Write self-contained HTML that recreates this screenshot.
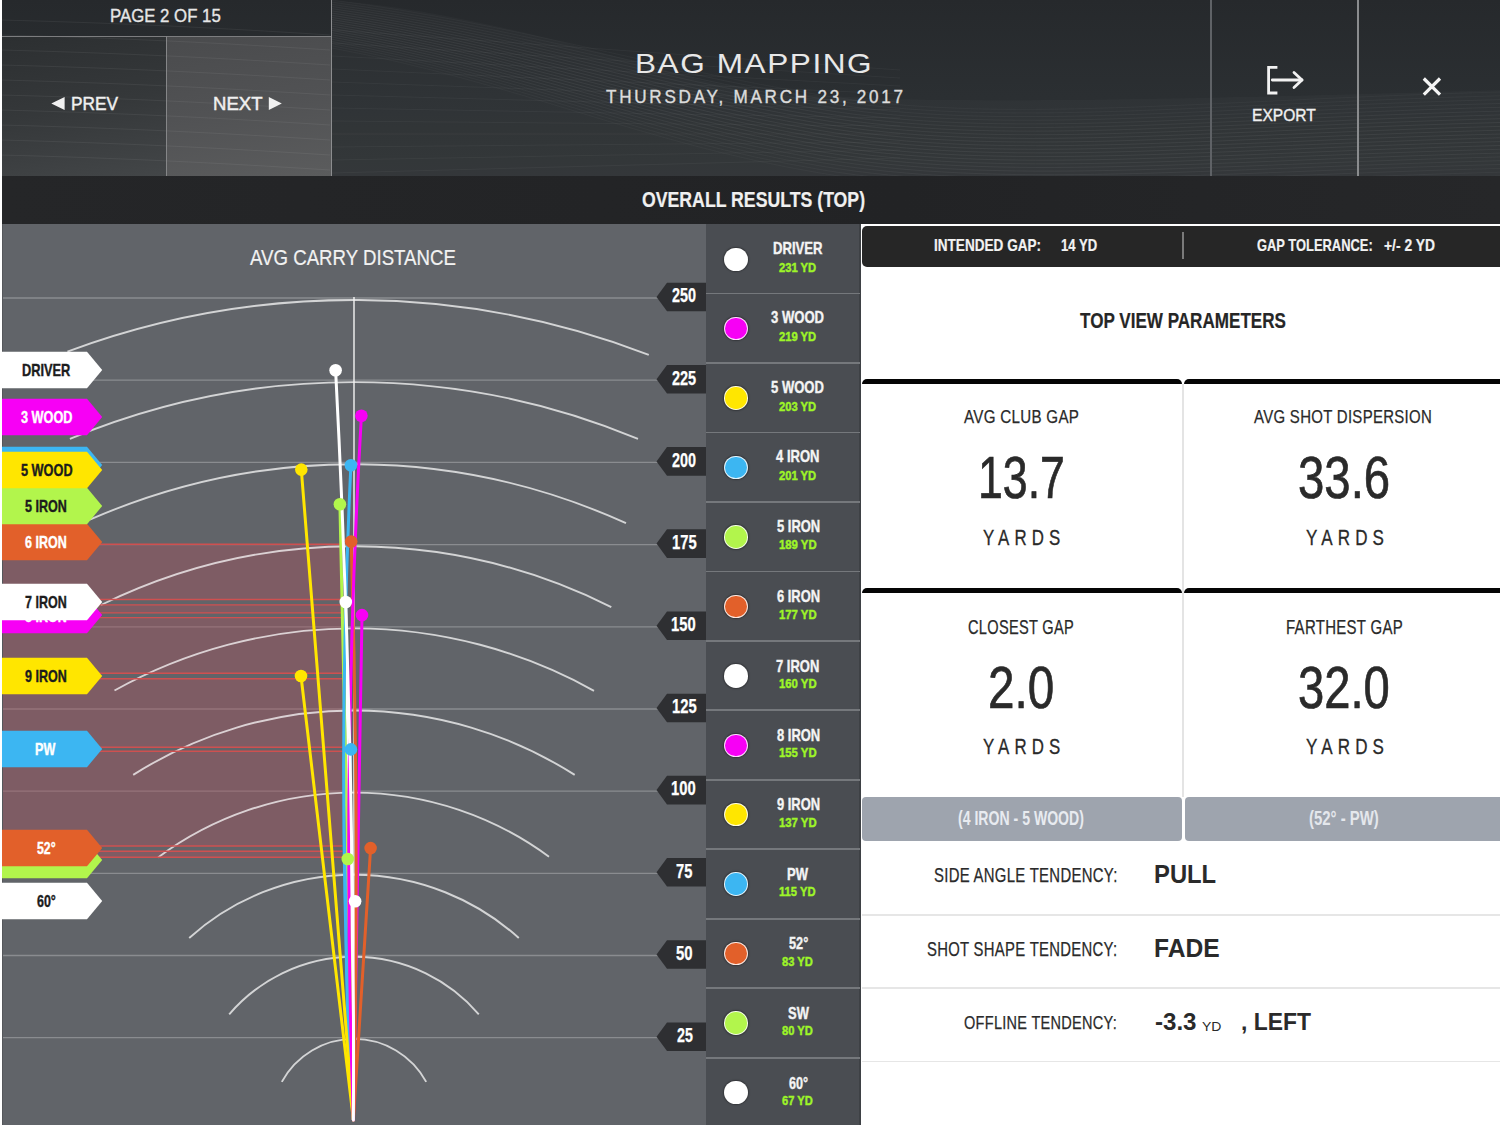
<!DOCTYPE html><html><head><meta charset="utf-8"><style>
*{margin:0;padding:0;box-sizing:border-box}
html,body{width:1500px;height:1125px;overflow:hidden;background:#fff}
body{position:relative;font-family:"Liberation Sans",sans-serif}
.abs{position:absolute}
.t{position:absolute;white-space:pre;line-height:1;transform-origin:0 0;font-family:"Liberation Sans",sans-serif}
.dot{position:absolute;width:23.6px;height:23.6px;border-radius:50%;border:1.4px solid rgba(255,255,255,0.85);box-shadow:0 0 1.5px 1px rgba(0,0,0,0.3)}
</style></head><body>
<div class="abs" style="left:2px;top:0;width:1498px;height:176px;background:linear-gradient(180deg,#26292c 0%,#2b2f32 55%,#303437 100%)"></div>
<div class="abs" style="left:2px;top:36px;width:164px;height:140px;background:linear-gradient(170deg,#2c2f31 0%,#35383a 50%,#434648 100%)"></div>
<div class="abs" style="left:167px;top:37px;width:164px;height:139px;background:linear-gradient(170deg,#4a4b4d 0%,#515254 50%,#5b5c5d 100%)"></div>
<svg class="abs" style="left:0;top:0" width="1500" height="176"><path d="M332,0 C450,10 560,40 700,80 C820,105 1000,105 1500,90 L1500,176 L332,176 Z" fill="#ffffff" fill-opacity="0.02"/><path d="M332,0.0 C520,25.0 640,65.0 820,95.0 S1200,100.0 1500,92.0" fill="none" stroke="#ffffff" stroke-opacity="0.030" stroke-width="1"/><path d="M332,2.2 C520,27.6 640,68.5 820,98.5 S1200,103.8 1500,95.8" fill="none" stroke="#ffffff" stroke-opacity="0.034" stroke-width="1"/><path d="M332,4.4 C520,30.3 640,72.1 820,102.1 S1200,107.6 1500,99.6" fill="none" stroke="#ffffff" stroke-opacity="0.038" stroke-width="1"/><path d="M332,6.5 C520,32.9 640,75.6 820,105.6 S1200,111.5 1500,103.5" fill="none" stroke="#ffffff" stroke-opacity="0.042" stroke-width="1"/><path d="M332,8.7 C520,35.5 640,79.2 820,109.2 S1200,115.3 1500,107.3" fill="none" stroke="#ffffff" stroke-opacity="0.046" stroke-width="1"/><path d="M332,10.9 C520,38.2 640,82.7 820,112.7 S1200,119.1 1500,111.1" fill="none" stroke="#ffffff" stroke-opacity="0.050" stroke-width="1"/><path d="M332,13.1 C520,40.8 640,86.3 820,116.3 S1200,122.9 1500,114.9" fill="none" stroke="#ffffff" stroke-opacity="0.053" stroke-width="1"/><path d="M332,15.3 C520,43.5 640,89.8 820,119.8 S1200,126.7 1500,118.7" fill="none" stroke="#ffffff" stroke-opacity="0.055" stroke-width="1"/><path d="M332,17.5 C520,46.1 640,93.4 820,123.4 S1200,130.5 1500,122.5" fill="none" stroke="#ffffff" stroke-opacity="0.057" stroke-width="1"/><path d="M332,19.6 C520,48.7 640,96.9 820,126.9 S1200,134.4 1500,126.4" fill="none" stroke="#ffffff" stroke-opacity="0.059" stroke-width="1"/><path d="M332,21.8 C520,51.4 640,100.5 820,130.5 S1200,138.2 1500,130.2" fill="none" stroke="#ffffff" stroke-opacity="0.060" stroke-width="1"/><path d="M332,24.0 C520,54.0 640,104.0 820,134.0 S1200,142.0 1500,134.0" fill="none" stroke="#ffffff" stroke-opacity="0.060" stroke-width="1"/><path d="M332,26.2 C520,56.6 640,107.5 820,137.5 S1200,145.8 1500,137.8" fill="none" stroke="#ffffff" stroke-opacity="0.060" stroke-width="1"/><path d="M332,28.4 C520,59.3 640,111.1 820,141.1 S1200,149.6 1500,141.6" fill="none" stroke="#ffffff" stroke-opacity="0.059" stroke-width="1"/><path d="M332,30.5 C520,61.9 640,114.6 820,144.6 S1200,153.5 1500,145.5" fill="none" stroke="#ffffff" stroke-opacity="0.057" stroke-width="1"/><path d="M332,32.7 C520,64.5 640,118.2 820,148.2 S1200,157.3 1500,149.3" fill="none" stroke="#ffffff" stroke-opacity="0.055" stroke-width="1"/><path d="M332,34.9 C520,67.2 640,121.7 820,151.7 S1200,161.1 1500,153.1" fill="none" stroke="#ffffff" stroke-opacity="0.053" stroke-width="1"/><path d="M332,37.1 C520,69.8 640,125.3 820,155.3 S1200,164.9 1500,156.9" fill="none" stroke="#ffffff" stroke-opacity="0.050" stroke-width="1"/><path d="M332,39.3 C520,72.5 640,128.8 820,158.8 S1200,168.7 1500,160.7" fill="none" stroke="#ffffff" stroke-opacity="0.046" stroke-width="1"/><path d="M332,41.5 C520,75.1 640,132.4 820,162.4 S1200,172.5 1500,164.5" fill="none" stroke="#ffffff" stroke-opacity="0.042" stroke-width="1"/><path d="M332,43.6 C520,77.7 640,135.9 820,165.9 S1200,176.4 1500,168.4" fill="none" stroke="#ffffff" stroke-opacity="0.038" stroke-width="1"/><path d="M332,45.8 C520,80.4 640,139.5 820,169.5 S1200,180.2 1500,172.2" fill="none" stroke="#ffffff" stroke-opacity="0.034" stroke-width="1"/><path d="M332,48.0 C520,83.0 640,143.0 820,173.0 S1200,184.0 1500,176.0" fill="none" stroke="#ffffff" stroke-opacity="0.030" stroke-width="1"/><path d="M332,30 L900,70" fill="none" stroke="#ffffff" stroke-opacity="0.04" stroke-width="1"/><path d="M332,43 L900,78" fill="none" stroke="#ffffff" stroke-opacity="0.04" stroke-width="1"/><path d="M332,56 L900,86" fill="none" stroke="#ffffff" stroke-opacity="0.04" stroke-width="1"/><path d="M332,69 L900,94" fill="none" stroke="#ffffff" stroke-opacity="0.04" stroke-width="1"/><path d="M332,82 L900,102" fill="none" stroke="#ffffff" stroke-opacity="0.04" stroke-width="1"/><path d="M332,95 L900,110" fill="none" stroke="#ffffff" stroke-opacity="0.04" stroke-width="1"/><path d="M332,108 L900,118" fill="none" stroke="#ffffff" stroke-opacity="0.04" stroke-width="1"/><path d="M332,121 L900,126" fill="none" stroke="#ffffff" stroke-opacity="0.04" stroke-width="1"/><path d="M332,134 L900,134" fill="none" stroke="#ffffff" stroke-opacity="0.04" stroke-width="1"/><path d="M332,147 L900,142" fill="none" stroke="#ffffff" stroke-opacity="0.04" stroke-width="1"/><path d="M332,160 L900,150" fill="none" stroke="#ffffff" stroke-opacity="0.04" stroke-width="1"/><path d="M332,173 L900,158" fill="none" stroke="#ffffff" stroke-opacity="0.04" stroke-width="1"/><path d="M0,20 C120,23 220,28 330,35" fill="none" stroke="#ffffff" stroke-opacity="0.06" stroke-width="1"/><path d="M0,35 C120,38 220,43 330,50" fill="none" stroke="#ffffff" stroke-opacity="0.06" stroke-width="1"/><path d="M0,50 C120,53 220,58 330,65" fill="none" stroke="#ffffff" stroke-opacity="0.06" stroke-width="1"/><path d="M0,65 C120,68 220,73 330,80" fill="none" stroke="#ffffff" stroke-opacity="0.06" stroke-width="1"/><path d="M0,80 C120,83 220,88 330,95" fill="none" stroke="#ffffff" stroke-opacity="0.06" stroke-width="1"/><path d="M0,95 C120,98 220,103 330,110" fill="none" stroke="#ffffff" stroke-opacity="0.06" stroke-width="1"/><path d="M0,110 C120,113 220,118 330,125" fill="none" stroke="#ffffff" stroke-opacity="0.06" stroke-width="1"/><path d="M0,125 C120,128 220,133 330,140" fill="none" stroke="#ffffff" stroke-opacity="0.06" stroke-width="1"/><path d="M0,140 C120,143 220,148 330,155" fill="none" stroke="#ffffff" stroke-opacity="0.06" stroke-width="1"/><path d="M0,155 C120,158 220,163 330,170" fill="none" stroke="#ffffff" stroke-opacity="0.06" stroke-width="1"/></svg>
<div class="abs" style="left:2px;top:35.5px;width:330px;height:1.5px;background:#7c7d7f"></div>
<div class="abs" style="left:165.5px;top:36px;width:1.5px;height:140px;background:#858688"></div>
<div class="abs" style="left:330.5px;top:0;width:1.6px;height:176px;background:#8c8d8f"></div>
<div class="abs" style="left:1210.2px;top:0;width:1.6px;height:176px;background:#5f6266"></div>
<div class="abs" style="left:1357px;top:0;width:1.6px;height:176px;background:#8a8c8e"></div>
<svg class="abs" style="left:0;top:0" width="1500" height="176">
 <polygon points="51.3,103.5 64.6,97.1 64.6,110" fill="#f0f0f0"/>
 <polygon points="281.8,103.5 268.8,97.1 268.8,110" fill="#f0f0f0"/>
 <path d="M1277.4,67.4 H1268.6 V93 H1277.4" fill="none" stroke="#f2f2f2" stroke-width="2.8"/>
 <path d="M1272.3,80 H1302" fill="none" stroke="#f2f2f2" stroke-width="2.8" stroke-linecap="round"/>
 <path d="M1294,72.5 L1302,80 L1294,87.5" fill="none" stroke="#f2f2f2" stroke-width="2.8" stroke-linecap="round" stroke-linejoin="round"/>
 <path d="M1423.8,78.5 L1440,94.6 M1440,78.5 L1423.8,94.6" fill="none" stroke="#f4f4f4" stroke-width="3.2"/>
</svg>
<div class="abs" style="left:2px;top:176px;width:1498px;height:48px;background:linear-gradient(90deg,#252628,#222325 60%,#262729)"></div>
<div class="abs" style="left:2px;top:224px;width:704px;height:901px;background:#616469"></div>
<div class="abs" style="left:2px;top:224px;width:1px;height:901px;background:#55575b"></div>
<svg class="abs" style="left:0;top:0" width="706" height="1125" viewBox="0 0 706 1125"><line x1="3" y1="1037.7" x2="660" y2="1037.7" stroke="#8a8c90" stroke-width="1.3"/><line x1="3" y1="955.5" x2="660" y2="955.5" stroke="#8a8c90" stroke-width="1.3"/><line x1="3" y1="873.3" x2="660" y2="873.3" stroke="#8a8c90" stroke-width="1.3"/><line x1="3" y1="791.1" x2="660" y2="791.1" stroke="#8a8c90" stroke-width="1.3"/><line x1="3" y1="709.0" x2="660" y2="709.0" stroke="#8a8c90" stroke-width="1.3"/><line x1="3" y1="626.8" x2="660" y2="626.8" stroke="#8a8c90" stroke-width="1.3"/><line x1="3" y1="544.6" x2="660" y2="544.6" stroke="#8a8c90" stroke-width="1.3"/><line x1="3" y1="462.4" x2="660" y2="462.4" stroke="#8a8c90" stroke-width="1.3"/><line x1="3" y1="380.2" x2="660" y2="380.2" stroke="#8a8c90" stroke-width="1.3"/><line x1="3" y1="298.0" x2="660" y2="298.0" stroke="#8a8c90" stroke-width="1.3"/><rect x="3" y="544.3" width="339.5" height="55.2" fill="#a8525e" fill-opacity="0.42"/><rect x="3" y="604.9" width="339.5" height="8.0" fill="#a8525e" fill-opacity="0.42"/><rect x="3" y="617.6" width="339.5" height="55.6" fill="#a8525e" fill-opacity="0.42"/><rect x="3" y="678.8" width="339.5" height="68.4" fill="#a8525e" fill-opacity="0.42"/><rect x="3" y="751.2" width="339.5" height="94.8" fill="#a8525e" fill-opacity="0.42"/><rect x="3" y="851.2" width="339.5" height="6.1" fill="#a8525e" fill-opacity="0.42"/><path d="M281.8,1081.9 A82.1,82.1 0 0 1 426.2,1081.9" fill="none" stroke="#ffffff" stroke-opacity="0.72" stroke-width="1.9"/><path d="M229.2,1014.3 A164.2,164.2 0 0 1 478.8,1014.3" fill="none" stroke="#ffffff" stroke-opacity="0.72" stroke-width="1.9"/><path d="M189.2,938.0 A246.3,246.3 0 0 1 518.8,938.0" fill="none" stroke="#ffffff" stroke-opacity="0.72" stroke-width="1.9"/><path d="M158.1,857.4 A328.4,328.4 0 0 1 549.0,856.8" fill="none" stroke="#ffffff" stroke-opacity="0.72" stroke-width="1.9"/><path d="M133.2,774.9 A410.5,410.5 0 0 1 574.7,774.9" fill="none" stroke="#ffffff" stroke-opacity="0.72" stroke-width="1.9"/><path d="M114.5,690.5 A492.6,492.6 0 0 1 594.0,690.8" fill="none" stroke="#ffffff" stroke-opacity="0.72" stroke-width="1.9"/><path d="M101.0,605.0 A574.7,574.7 0 0 1 611.3,607.1" fill="none" stroke="#ffffff" stroke-opacity="0.72" stroke-width="1.9"/><path d="M89.8,519.7 A656.8,656.8 0 0 1 626.0,523.2" fill="none" stroke="#ffffff" stroke-opacity="0.72" stroke-width="1.9"/><path d="M69.9,438.9 A738.9,738.9 0 0 1 638.0,438.9" fill="none" stroke="#ffffff" stroke-opacity="0.72" stroke-width="1.9"/><path d="M67.4,351.6 A821.0,821.0 0 0 1 648.8,354.8" fill="none" stroke="#ffffff" stroke-opacity="0.72" stroke-width="1.9"/><line x1="3" y1="544.3" x2="342.5" y2="544.3" stroke="#cf5050" stroke-width="1.4"/><line x1="3" y1="599.5" x2="342.5" y2="599.5" stroke="#cf5050" stroke-width="1.4"/><line x1="3" y1="604.9" x2="342.5" y2="604.9" stroke="#cf5050" stroke-width="1.4"/><line x1="3" y1="612.9" x2="342.5" y2="612.9" stroke="#cf5050" stroke-width="1.4"/><line x1="3" y1="617.6" x2="342.5" y2="617.6" stroke="#cf5050" stroke-width="1.4"/><line x1="3" y1="673.2" x2="342.5" y2="673.2" stroke="#cf5050" stroke-width="1.4"/><line x1="3" y1="678.8" x2="342.5" y2="678.8" stroke="#cf5050" stroke-width="1.4"/><line x1="3" y1="747.2" x2="342.5" y2="747.2" stroke="#cf5050" stroke-width="1.4"/><line x1="3" y1="751.2" x2="342.5" y2="751.2" stroke="#cf5050" stroke-width="1.4"/><line x1="3" y1="846.0" x2="342.5" y2="846.0" stroke="#cf5050" stroke-width="1.4"/><line x1="3" y1="851.2" x2="342.5" y2="851.2" stroke="#cf5050" stroke-width="1.4"/><line x1="3" y1="857.3" x2="342.5" y2="857.3" stroke="#cf5050" stroke-width="1.4"/><line x1="354" y1="297" x2="354" y2="1121" stroke="#f4f4f4" stroke-width="1.4"/><polygon points="656.5,1036.7 667,1022.4 706,1022.4 706,1051.0 667,1051.0" fill="#2e2f32"/><polygon points="656.5,954.5 667,940.2 706,940.2 706,968.8 667,968.8" fill="#2e2f32"/><polygon points="656.5,872.3 667,858.0 706,858.0 706,886.6 667,886.6" fill="#2e2f32"/><polygon points="656.5,790.1 667,775.8 706,775.8 706,804.4 667,804.4" fill="#2e2f32"/><polygon points="656.5,708.0 667,693.7 706,693.7 706,722.2 667,722.2" fill="#2e2f32"/><polygon points="656.5,625.8 667,611.5 706,611.5 706,640.1 667,640.1" fill="#2e2f32"/><polygon points="656.5,543.6 667,529.3 706,529.3 706,557.9 667,557.9" fill="#2e2f32"/><polygon points="656.5,461.4 667,447.1 706,447.1 706,475.7 667,475.7" fill="#2e2f32"/><polygon points="656.5,379.2 667,364.9 706,364.9 706,393.5 667,393.5" fill="#2e2f32"/><polygon points="656.5,297.0 667,282.7 706,282.7 706,311.3 667,311.3" fill="#2e2f32"/><path d="M353.4,1120.0 L355.1,901.3" fill="none" stroke="#ffffff" stroke-width="3" stroke-linecap="round"/><path d="M353.4,1120.0 L347.8,859.0" fill="none" stroke="#b2f54c" stroke-width="3" stroke-linecap="round"/><path d="M353.4,1120.0 L370.6,848.1" fill="none" stroke="#e2602a" stroke-width="3" stroke-linecap="round"/><path d="M353.4,1120.0 Q339.89,934.70 350.9,749.4" fill="none" stroke="#3cb6f2" stroke-width="3" stroke-linecap="round"/><path d="M353.4,1120.0 L301.0,676.0" fill="none" stroke="#ffe600" stroke-width="3" stroke-linecap="round"/><path d="M353.4,1120.0 L362.0,615.1" fill="none" stroke="#f700f5" stroke-width="3" stroke-linecap="round"/><path d="M353.4,1120.0 L345.8,602.0" fill="none" stroke="#ffffff" stroke-width="3" stroke-linecap="round"/><path d="M353.4,1120.0 Q359.91,830.75 351.2,541.5" fill="none" stroke="#e2602a" stroke-width="3" stroke-linecap="round"/><path d="M353.4,1120.0 L339.9,504.3" fill="none" stroke="#b2f54c" stroke-width="3" stroke-linecap="round"/><path d="M353.4,1120.0 Q335.20,792.60 350.9,465.2" fill="none" stroke="#3cb6f2" stroke-width="3" stroke-linecap="round"/><path d="M353.4,1120.0 L301.3,469.6" fill="none" stroke="#ffe600" stroke-width="3" stroke-linecap="round"/><path d="M353.4,1120.0 Q341.09,767.90 361.4,415.8" fill="none" stroke="#f700f5" stroke-width="3" stroke-linecap="round"/><path d="M353.4,1120.0 Q355.10,745.10 335.6,370.2" fill="none" stroke="#ffffff" stroke-width="3" stroke-linecap="round"/><circle cx="355.1" cy="901.3" r="6.3" fill="#ffffff"/><circle cx="347.8" cy="859.0" r="6.3" fill="#b2f54c"/><circle cx="370.6" cy="848.1" r="6.3" fill="#e2602a"/><circle cx="350.9" cy="749.4" r="6.3" fill="#3cb6f2"/><circle cx="301.0" cy="676.0" r="6.3" fill="#ffe600"/><circle cx="362.0" cy="615.1" r="6.3" fill="#f700f5"/><circle cx="345.8" cy="602.0" r="6.3" fill="#ffffff"/><circle cx="351.2" cy="541.5" r="6.3" fill="#e2602a"/><circle cx="339.9" cy="504.3" r="6.3" fill="#b2f54c"/><circle cx="350.9" cy="465.2" r="6.3" fill="#3cb6f2"/><circle cx="301.3" cy="469.6" r="6.3" fill="#ffe600"/><circle cx="361.4" cy="415.8" r="6.3" fill="#f700f5"/><circle cx="335.6" cy="370.2" r="6.3" fill="#ffffff"/></svg>
<svg class="abs" style="left:0;top:882.0px" width="104" height="38"><polygon points="2,0.8 87,0.8 102.2,19 87,37.2 2,37.2" fill="#ffffff"/></svg><div class="t" style="left:36.94px;top:893.47px;font-size:16.38px;font-weight:700;letter-spacing:0em;color:#1c1c1c;transform:scaleX(0.7620);-webkit-text-stroke:0.4px #1c1c1c">60°</div><svg class="abs" style="left:0;top:841.0px" width="104" height="38"><polygon points="2,0.8 87,0.8 102.2,19 87,37.2 2,37.2" fill="#b2f54c"/></svg><svg class="abs" style="left:0;top:829.0px" width="104" height="38"><polygon points="2,0.8 87,0.8 102.2,19 87,37.2 2,37.2" fill="#e2602a"/></svg><div class="t" style="left:36.89px;top:840.47px;font-size:16.38px;font-weight:700;letter-spacing:0em;color:#ffffff;transform:scaleX(0.7492);-webkit-text-stroke:0.4px #ffffff">52°</div><svg class="abs" style="left:0;top:730.0px" width="104" height="38"><polygon points="2,0.8 87,0.8 102.2,19 87,37.2 2,37.2" fill="#3cb6f2"/></svg><div class="t" style="left:35.46px;top:741.47px;font-size:16.38px;font-weight:700;letter-spacing:0em;color:#ffffff;transform:scaleX(0.7704);-webkit-text-stroke:0.4px #ffffff">PW</div><svg class="abs" style="left:0;top:657.0px" width="104" height="38"><polygon points="2,0.8 87,0.8 102.2,19 87,37.2 2,37.2" fill="#ffe600"/></svg><div class="t" style="left:25.08px;top:668.47px;font-size:16.38px;font-weight:700;letter-spacing:0em;color:#1c1c1c;transform:scaleX(0.7649);-webkit-text-stroke:0.4px #1c1c1c">9 IRON</div><svg class="abs" style="left:0;top:596.3px" width="104" height="38"><polygon points="2,0.8 87,0.8 102.2,19 87,37.2 2,37.2" fill="#f700f5"/></svg><div class="t" style="left:25.12px;top:607.58px;font-size:16.38px;font-weight:700;letter-spacing:0em;color:#ffffff;transform:scaleX(0.7648);-webkit-text-stroke:0.4px #ffffff">8 IRON</div><svg class="abs" style="left:0;top:583.0px" width="104" height="38"><polygon points="2,0.8 87,0.8 102.2,19 87,37.2 2,37.2" fill="#ffffff"/></svg><div class="t" style="left:25.02px;top:594.28px;font-size:16.38px;font-weight:700;letter-spacing:0em;color:#1c1c1c;transform:scaleX(0.7648);-webkit-text-stroke:0.4px #1c1c1c">7 IRON</div><svg class="abs" style="left:0;top:522.7px" width="104" height="38"><polygon points="2,0.8 87,0.8 102.2,19 87,37.2 2,37.2" fill="#e2602a"/></svg><div class="t" style="left:25.09px;top:533.98px;font-size:16.38px;font-weight:700;letter-spacing:0em;color:#ffffff;transform:scaleX(0.7648);-webkit-text-stroke:0.4px #ffffff">6 IRON</div><svg class="abs" style="left:0;top:486.6px" width="104" height="38"><polygon points="2,0.8 87,0.8 102.2,19 87,37.2 2,37.2" fill="#b2f54c"/></svg><div class="t" style="left:25.03px;top:497.65px;font-size:16.38px;font-weight:700;letter-spacing:0em;color:#1c1c1c;transform:scaleX(0.7674);-webkit-text-stroke:0.4px #1c1c1c">5 IRON</div><svg class="abs" style="left:0;top:446.4px" width="104" height="38"><polygon points="2,0.8 87,0.8 102.2,19 87,37.2 2,37.2" fill="#3cb6f2"/></svg><svg class="abs" style="left:0;top:450.8px" width="104" height="38"><polygon points="2,0.8 87,0.8 102.2,19 87,37.2 2,37.2" fill="#ffe600"/></svg><div class="t" style="left:20.89px;top:462.31px;font-size:16.38px;font-weight:700;letter-spacing:0em;color:#1c1c1c;transform:scaleX(0.7773);-webkit-text-stroke:0.4px #1c1c1c">5 WOOD</div><svg class="abs" style="left:0;top:397.5px" width="104" height="38"><polygon points="2,0.8 87,0.8 102.2,19 87,37.2 2,37.2" fill="#f700f5"/></svg><div class="t" style="left:20.87px;top:409.12px;font-size:16.38px;font-weight:700;letter-spacing:0em;color:#ffffff;transform:scaleX(0.7770);-webkit-text-stroke:0.4px #ffffff">3 WOOD</div><svg class="abs" style="left:0;top:351.0px" width="104" height="38"><polygon points="2,0.8 87,0.8 102.2,19 87,37.2 2,37.2" fill="#ffffff"/></svg><div class="t" style="left:21.53px;top:362.47px;font-size:16.38px;font-weight:700;letter-spacing:0em;color:#1c1c1c;transform:scaleX(0.7822);-webkit-text-stroke:0.4px #1c1c1c">DRIVER</div>
<div class="t" style="left:676.82px;top:1026.03px;font-size:19.42px;font-weight:700;letter-spacing:0em;color:#ffffff;transform:scaleX(0.7317);-webkit-text-stroke:0.25px #ffffff">25</div><div class="t" style="left:675.91px;top:943.53px;font-size:19.42px;font-weight:700;letter-spacing:0em;color:#ffffff;transform:scaleX(0.7701);-webkit-text-stroke:0.25px #ffffff">50</div><div class="t" style="left:675.70px;top:861.81px;font-size:19.42px;font-weight:700;letter-spacing:0em;color:#ffffff;transform:scaleX(0.7578);-webkit-text-stroke:0.25px #ffffff">75</div><div class="t" style="left:671.46px;top:779.45px;font-size:19.42px;font-weight:700;letter-spacing:0em;color:#ffffff;transform:scaleX(0.7618);-webkit-text-stroke:0.25px #ffffff">100</div><div class="t" style="left:671.72px;top:696.83px;font-size:19.42px;font-weight:700;letter-spacing:0em;color:#ffffff;transform:scaleX(0.7615);-webkit-text-stroke:0.25px #ffffff">125</div><div class="t" style="left:671.46px;top:615.20px;font-size:19.42px;font-weight:700;letter-spacing:0em;color:#ffffff;transform:scaleX(0.7618);-webkit-text-stroke:0.25px #ffffff">150</div><div class="t" style="left:671.72px;top:532.80px;font-size:19.42px;font-weight:700;letter-spacing:0em;color:#ffffff;transform:scaleX(0.7615);-webkit-text-stroke:0.25px #ffffff">175</div><div class="t" style="left:672.48px;top:450.75px;font-size:19.42px;font-weight:700;letter-spacing:0em;color:#ffffff;transform:scaleX(0.7419);-webkit-text-stroke:0.25px #ffffff">200</div><div class="t" style="left:672.24px;top:368.62px;font-size:19.42px;font-weight:700;letter-spacing:0em;color:#ffffff;transform:scaleX(0.7470);-webkit-text-stroke:0.25px #ffffff">225</div><div class="t" style="left:672.48px;top:285.99px;font-size:19.42px;font-weight:700;letter-spacing:0em;color:#ffffff;transform:scaleX(0.7419);-webkit-text-stroke:0.25px #ffffff">250</div>
<div class="abs" style="left:706px;top:224px;width:154px;height:901px;background:#4a4d52"></div>
<div class="abs" style="left:858.8px;top:224px;width:2px;height:901px;background:#3e4145"></div>
<div class="abs" style="left:706px;top:292.6px;width:154px;height:1.8px;background:#75787c"></div><div class="abs" style="left:706px;top:362.1px;width:154px;height:1.8px;background:#75787c"></div><div class="abs" style="left:706px;top:431.5px;width:154px;height:1.8px;background:#75787c"></div><div class="abs" style="left:706px;top:501.0px;width:154px;height:1.8px;background:#75787c"></div><div class="abs" style="left:706px;top:570.5px;width:154px;height:1.8px;background:#75787c"></div><div class="abs" style="left:706px;top:640.0px;width:154px;height:1.8px;background:#75787c"></div><div class="abs" style="left:706px;top:709.4px;width:154px;height:1.8px;background:#75787c"></div><div class="abs" style="left:706px;top:778.9px;width:154px;height:1.8px;background:#75787c"></div><div class="abs" style="left:706px;top:848.4px;width:154px;height:1.8px;background:#75787c"></div><div class="abs" style="left:706px;top:917.8px;width:154px;height:1.8px;background:#75787c"></div><div class="abs" style="left:706px;top:987.3px;width:154px;height:1.8px;background:#75787c"></div><div class="abs" style="left:706px;top:1056.8px;width:154px;height:1.8px;background:#75787c"></div>
<div class="dot" style="left:724.1px;top:247.5px;background:#ffffff"></div><div class="t" style="left:772.73px;top:240.30px;font-size:17.39px;font-weight:700;letter-spacing:0em;color:#f4f4f4;transform:scaleX(0.7548);-webkit-text-stroke:0.4px #f4f4f4">DRIVER</div><div class="t" style="left:779.20px;top:260.84px;font-size:13.62px;font-weight:700;letter-spacing:0em;color:#9ef528;transform:scaleX(0.8232);-webkit-text-stroke:0.45px #9ef528">231 YD</div><div class="dot" style="left:724.1px;top:316.9px;background:#f700f5"></div><div class="t" style="left:771.15px;top:309.39px;font-size:17.39px;font-weight:700;letter-spacing:0em;color:#f4f4f4;transform:scaleX(0.7532);-webkit-text-stroke:0.4px #f4f4f4">3 WOOD</div><div class="t" style="left:779.20px;top:329.86px;font-size:13.62px;font-weight:700;letter-spacing:0em;color:#9ef528;transform:scaleX(0.8232);-webkit-text-stroke:0.45px #9ef528">219 YD</div><div class="dot" style="left:724.1px;top:386.4px;background:#ffe600"></div><div class="t" style="left:771.17px;top:379.27px;font-size:17.39px;font-weight:700;letter-spacing:0em;color:#f4f4f4;transform:scaleX(0.7514);-webkit-text-stroke:0.4px #f4f4f4">5 WOOD</div><div class="t" style="left:779.20px;top:399.68px;font-size:13.62px;font-weight:700;letter-spacing:0em;color:#9ef528;transform:scaleX(0.8232);-webkit-text-stroke:0.45px #9ef528">203 YD</div><div class="dot" style="left:724.1px;top:455.8px;background:#3cb6f2"></div><div class="t" style="left:776.16px;top:448.35px;font-size:17.39px;font-weight:700;letter-spacing:0em;color:#f4f4f4;transform:scaleX(0.7505);-webkit-text-stroke:0.4px #f4f4f4">4 IRON</div><div class="t" style="left:779.20px;top:468.70px;font-size:13.62px;font-weight:700;letter-spacing:0em;color:#9ef528;transform:scaleX(0.8232);-webkit-text-stroke:0.45px #9ef528">201 YD</div><div class="dot" style="left:724.1px;top:525.2px;background:#b2f54c"></div><div class="t" style="left:776.89px;top:518.23px;font-size:17.39px;font-weight:700;letter-spacing:0em;color:#f4f4f4;transform:scaleX(0.7464);-webkit-text-stroke:0.4px #f4f4f4">5 IRON</div><div class="t" style="left:778.90px;top:538.02px;font-size:13.62px;font-weight:700;letter-spacing:0em;color:#9ef528;transform:scaleX(0.8330);-webkit-text-stroke:0.45px #9ef528">189 YD</div><div class="dot" style="left:724.1px;top:594.6px;background:#e2602a"></div><div class="t" style="left:776.93px;top:587.81px;font-size:17.39px;font-weight:700;letter-spacing:0em;color:#f4f4f4;transform:scaleX(0.7441);-webkit-text-stroke:0.4px #f4f4f4">6 IRON</div><div class="t" style="left:778.90px;top:607.84px;font-size:13.62px;font-weight:700;letter-spacing:0em;color:#9ef528;transform:scaleX(0.8330);-webkit-text-stroke:0.45px #9ef528">177 YD</div><div class="dot" style="left:724.1px;top:664.1px;background:#ffffff"></div><div class="t" style="left:776.22px;top:657.69px;font-size:17.39px;font-weight:700;letter-spacing:0em;color:#f4f4f4;transform:scaleX(0.7479);-webkit-text-stroke:0.4px #f4f4f4">7 IRON</div><div class="t" style="left:778.90px;top:676.86px;font-size:13.62px;font-weight:700;letter-spacing:0em;color:#9ef528;transform:scaleX(0.8330);-webkit-text-stroke:0.45px #9ef528">160 YD</div><div class="dot" style="left:724.1px;top:733.5px;background:#f700f5"></div><div class="t" style="left:776.90px;top:727.27px;font-size:17.39px;font-weight:700;letter-spacing:0em;color:#f4f4f4;transform:scaleX(0.7462);-webkit-text-stroke:0.4px #f4f4f4">8 IRON</div><div class="t" style="left:778.90px;top:746.04px;font-size:13.62px;font-weight:700;letter-spacing:0em;color:#9ef528;transform:scaleX(0.8330);-webkit-text-stroke:0.45px #9ef528">155 YD</div><div class="dot" style="left:724.1px;top:802.9px;background:#ffe600"></div><div class="t" style="left:776.94px;top:796.35px;font-size:17.39px;font-weight:700;letter-spacing:0em;color:#f4f4f4;transform:scaleX(0.7441);-webkit-text-stroke:0.4px #f4f4f4">9 IRON</div><div class="t" style="left:778.90px;top:815.70px;font-size:13.62px;font-weight:700;letter-spacing:0em;color:#9ef528;transform:scaleX(0.8330);-webkit-text-stroke:0.45px #9ef528">137 YD</div><div class="dot" style="left:724.1px;top:872.4px;background:#3cb6f2"></div><div class="t" style="left:787.00px;top:866.23px;font-size:17.39px;font-weight:700;letter-spacing:0em;color:#f4f4f4;transform:scaleX(0.7503);-webkit-text-stroke:0.4px #f4f4f4">PW</div><div class="t" style="left:779.15px;top:885.18px;font-size:13.62px;font-weight:700;letter-spacing:0em;color:#9ef528;transform:scaleX(0.8229);-webkit-text-stroke:0.45px #9ef528">115 YD</div><div class="dot" style="left:724.1px;top:941.8px;background:#e2602a"></div><div class="t" style="left:788.59px;top:935.31px;font-size:17.39px;font-weight:700;letter-spacing:0em;color:#f4f4f4;transform:scaleX(0.7317);-webkit-text-stroke:0.4px #f4f4f4">52°</div><div class="t" style="left:782.26px;top:954.84px;font-size:13.62px;font-weight:700;letter-spacing:0em;color:#9ef528;transform:scaleX(0.8200);-webkit-text-stroke:0.45px #9ef528">83 YD</div><div class="dot" style="left:724.1px;top:1011.2px;background:#b2f54c"></div><div class="t" style="left:787.54px;top:1005.19px;font-size:17.39px;font-weight:700;letter-spacing:0em;color:#f4f4f4;transform:scaleX(0.7456);-webkit-text-stroke:0.4px #f4f4f4">SW</div><div class="t" style="left:782.26px;top:1023.86px;font-size:13.62px;font-weight:700;letter-spacing:0em;color:#9ef528;transform:scaleX(0.8200);-webkit-text-stroke:0.45px #9ef528">80 YD</div><div class="dot" style="left:724.1px;top:1080.7px;background:#ffffff"></div><div class="t" style="left:788.65px;top:1074.73px;font-size:17.39px;font-weight:700;letter-spacing:0em;color:#f4f4f4;transform:scaleX(0.7255);-webkit-text-stroke:0.4px #f4f4f4">60°</div><div class="t" style="left:782.29px;top:1093.68px;font-size:13.62px;font-weight:700;letter-spacing:0em;color:#9ef528;transform:scaleX(0.8168);-webkit-text-stroke:0.45px #9ef528">67 YD</div>
<div class="abs" style="left:860.6px;top:224px;width:640px;height:901px;background:#ffffff"></div>
<div class="abs" style="left:862px;top:226px;width:650px;height:40.5px;background:#262626;border-radius:5px"></div>
<div class="abs" style="left:1182.3px;top:232px;width:1.8px;height:27px;background:#7a7a7a"></div>
<div class="abs" style="left:1182.2px;top:384px;width:1.6px;height:413px;background:#e4e4e4"></div>
<div class="abs" style="left:862px;top:379px;width:320px;height:5px;background:#050505;border-radius:5px 5px 0 0"></div>
<div class="abs" style="left:1184px;top:379px;width:330px;height:5px;background:#050505;border-radius:5px 5px 0 0"></div>
<div class="abs" style="left:862px;top:588px;width:320px;height:5px;background:#050505;border-radius:5px 5px 0 0"></div>
<div class="abs" style="left:1184px;top:588px;width:330px;height:5px;background:#050505;border-radius:5px 5px 0 0"></div>
<div class="abs" style="left:862px;top:797px;width:319.5px;height:44px;background:#9ea4ae;border-radius:4px"></div>
<div class="abs" style="left:1184.5px;top:797px;width:330px;height:44px;background:#9ea4ae;border-radius:4px"></div>
<div class="abs" style="left:862px;top:914px;width:638px;height:1.5px;background:#e6e6e6"></div>
<div class="abs" style="left:862px;top:987px;width:638px;height:1.5px;background:#e6e6e6"></div>
<div class="abs" style="left:862px;top:1060.5px;width:638px;height:1.5px;background:#e6e6e6"></div>
<div class="t" style="left:109.75px;top:6.56px;font-size:18.55px;font-weight:400;letter-spacing:0em;color:#e6e6e6;transform:scaleX(0.9063);-webkit-text-stroke:0.35px #e6e6e6">PAGE 2 OF 15</div><div class="t" style="left:70.71px;top:94.95px;font-size:18.12px;font-weight:400;letter-spacing:0em;color:#f0f0f0;transform:scaleX(0.9537);-webkit-text-stroke:0.45px #f0f0f0">PREV</div><div class="t" style="left:212.56px;top:94.95px;font-size:18.12px;font-weight:400;letter-spacing:0em;color:#f0f0f0;transform:scaleX(1.0245);-webkit-text-stroke:0.45px #f0f0f0">NEXT</div><div class="t" style="left:635.08px;top:50.01px;font-size:27.68px;font-weight:400;letter-spacing:0.05em;color:#e8e8e8;transform:scaleX(1.1399)">BAG MAPPING</div><div class="t" style="left:606.02px;top:88.17px;font-size:18.55px;font-weight:400;letter-spacing:0.16em;color:#dcdcdc;transform:scaleX(0.9229);-webkit-text-stroke:0.4px #dcdcdc">THURSDAY, MARCH 23, 2017</div><div class="t" style="left:1251.62px;top:107.68px;font-size:15.94px;font-weight:400;letter-spacing:0em;color:#f0f0f0;transform:scaleX(0.9762);-webkit-text-stroke:0.35px #f0f0f0">EXPORT</div><div class="t" style="left:642.25px;top:189.01px;font-size:22.46px;font-weight:700;letter-spacing:0em;color:#f0f0f0;transform:scaleX(0.7877);-webkit-text-stroke:0.2px #f0f0f0">OVERALL RESULTS (TOP)</div><div class="t" style="left:250.07px;top:246.91px;font-size:22.17px;font-weight:400;letter-spacing:0em;color:#f2f2f2;transform:scaleX(0.8418);-webkit-text-stroke:0.2px #f2f2f2">AVG CARRY DISTANCE</div><div class="t" style="left:933.63px;top:238.02px;font-size:16.96px;font-weight:700;letter-spacing:0em;color:#f2f2f2;transform:scaleX(0.8012);-webkit-text-stroke:0.2px #f2f2f2">INTENDED GAP:</div><div class="t" style="left:1060.97px;top:238.02px;font-size:16.96px;font-weight:700;letter-spacing:0em;color:#f2f2f2;transform:scaleX(0.7718);-webkit-text-stroke:0.2px #f2f2f2">14 YD</div><div class="t" style="left:1257.28px;top:238.02px;font-size:16.96px;font-weight:700;letter-spacing:0em;color:#f2f2f2;transform:scaleX(0.7619);-webkit-text-stroke:0.2px #f2f2f2">GAP TOLERANCE:</div><div class="t" style="left:1384.19px;top:237.72px;font-size:16.96px;font-weight:700;letter-spacing:0em;color:#f2f2f2;transform:scaleX(0.8176);-webkit-text-stroke:0.2px #f2f2f2">+/- 2 YD</div><div class="t" style="left:1079.98px;top:309.87px;font-size:21.59px;font-weight:700;letter-spacing:0em;color:#262626;transform:scaleX(0.7916);-webkit-text-stroke:0.2px #262626">TOP VIEW PARAMETERS</div><div class="t" style="left:963.96px;top:408.12px;font-size:18.55px;font-weight:400;letter-spacing:0.02em;color:#2a2a2a;transform:scaleX(0.8169);-webkit-text-stroke:0.25px #2a2a2a">AVG CLUB GAP</div><div class="t" style="left:1254.28px;top:408.12px;font-size:18.55px;font-weight:400;letter-spacing:0.02em;color:#2a2a2a;transform:scaleX(0.8076);-webkit-text-stroke:0.25px #2a2a2a">AVG SHOT DISPERSION</div><div class="t" style="left:968.37px;top:617.67px;font-size:19.42px;font-weight:400;letter-spacing:0.02em;color:#2a2a2a;transform:scaleX(0.7521);-webkit-text-stroke:0.25px #2a2a2a">CLOSEST GAP</div><div class="t" style="left:1285.64px;top:617.67px;font-size:19.42px;font-weight:400;letter-spacing:0.02em;color:#2a2a2a;transform:scaleX(0.7714);-webkit-text-stroke:0.25px #2a2a2a">FARTHEST GAP</div><div class="t" style="left:978.32px;top:448.28px;font-size:59.13px;font-weight:400;letter-spacing:0em;color:#2a2a2a;transform:scaleX(0.7558);-webkit-text-stroke:0.7px #2a2a2a">13.7</div><div class="t" style="left:1298.04px;top:448.28px;font-size:59.13px;font-weight:400;letter-spacing:0em;color:#2a2a2a;transform:scaleX(0.8008);-webkit-text-stroke:0.7px #2a2a2a">33.6</div><div class="t" style="left:987.94px;top:659.48px;font-size:58.70px;font-weight:400;letter-spacing:0em;color:#2a2a2a;transform:scaleX(0.8126);-webkit-text-stroke:0.7px #2a2a2a">2.0</div><div class="t" style="left:1297.56px;top:659.48px;font-size:58.70px;font-weight:400;letter-spacing:0em;color:#2a2a2a;transform:scaleX(0.8039);-webkit-text-stroke:0.7px #2a2a2a">32.0</div><div class="t" style="left:982.93px;top:526.73px;font-size:22.17px;font-weight:400;letter-spacing:0.3em;color:#2a2a2a;transform:scaleX(0.7618);-webkit-text-stroke:0.3px #2a2a2a">YARDS</div><div class="t" style="left:1305.53px;top:526.73px;font-size:22.17px;font-weight:400;letter-spacing:0.3em;color:#2a2a2a;transform:scaleX(0.7696);-webkit-text-stroke:0.3px #2a2a2a">YARDS</div><div class="t" style="left:982.93px;top:735.92px;font-size:22.17px;font-weight:400;letter-spacing:0.3em;color:#2a2a2a;transform:scaleX(0.7618);-webkit-text-stroke:0.3px #2a2a2a">YARDS</div><div class="t" style="left:1305.53px;top:735.92px;font-size:22.17px;font-weight:400;letter-spacing:0.3em;color:#2a2a2a;transform:scaleX(0.7696);-webkit-text-stroke:0.3px #2a2a2a">YARDS</div><div class="t" style="left:958.45px;top:808.82px;font-size:19.71px;font-weight:700;letter-spacing:0em;color:#e8ebf0;transform:scaleX(0.7151)">(4 IRON - 5 WOOD)</div><div class="t" style="left:1309.34px;top:808.82px;font-size:19.71px;font-weight:700;letter-spacing:0em;color:#e4e7ec;transform:scaleX(0.7576)">(52° - PW)</div><div class="t" style="left:933.53px;top:866.18px;font-size:19.42px;font-weight:400;letter-spacing:0.02em;color:#2a2a2a;transform:scaleX(0.7674);-webkit-text-stroke:0.25px #2a2a2a">SIDE ANGLE TENDENCY:</div><div class="t" style="left:927.01px;top:940.16px;font-size:19.42px;font-weight:400;letter-spacing:0.02em;color:#2a2a2a;transform:scaleX(0.7657);-webkit-text-stroke:0.25px #2a2a2a">SHOT SHAPE TENDENCY:</div><div class="t" style="left:964.22px;top:1012.53px;font-size:18.99px;font-weight:400;letter-spacing:0.02em;color:#2a2a2a;transform:scaleX(0.7645);-webkit-text-stroke:0.25px #2a2a2a">OFFLINE TENDENCY:</div><div class="t" style="left:1154.32px;top:862.30px;font-size:25.36px;font-weight:700;letter-spacing:0em;color:#2a2a2a;transform:scaleX(0.9388)">PULL</div><div class="t" style="left:1154.19px;top:935.87px;font-size:25.65px;font-weight:700;letter-spacing:0em;color:#2a2a2a;transform:scaleX(0.9595)">FADE</div><div class="t" style="left:1155.16px;top:1009.50px;font-size:24.64px;font-weight:700;letter-spacing:0em;color:#2a2a2a;transform:scaleX(0.9784)">-3.3</div><div class="t" style="left:1202.46px;top:1020.21px;font-size:13.62px;font-weight:400;letter-spacing:0em;color:#2a2a2a;transform:scaleX(1.0281)">YD</div><div class="t" style="left:1240.93px;top:1009.92px;font-size:24.64px;font-weight:700;letter-spacing:0em;color:#2a2a2a;transform:scaleX(0.9300)">, LEFT</div>
</body></html>
